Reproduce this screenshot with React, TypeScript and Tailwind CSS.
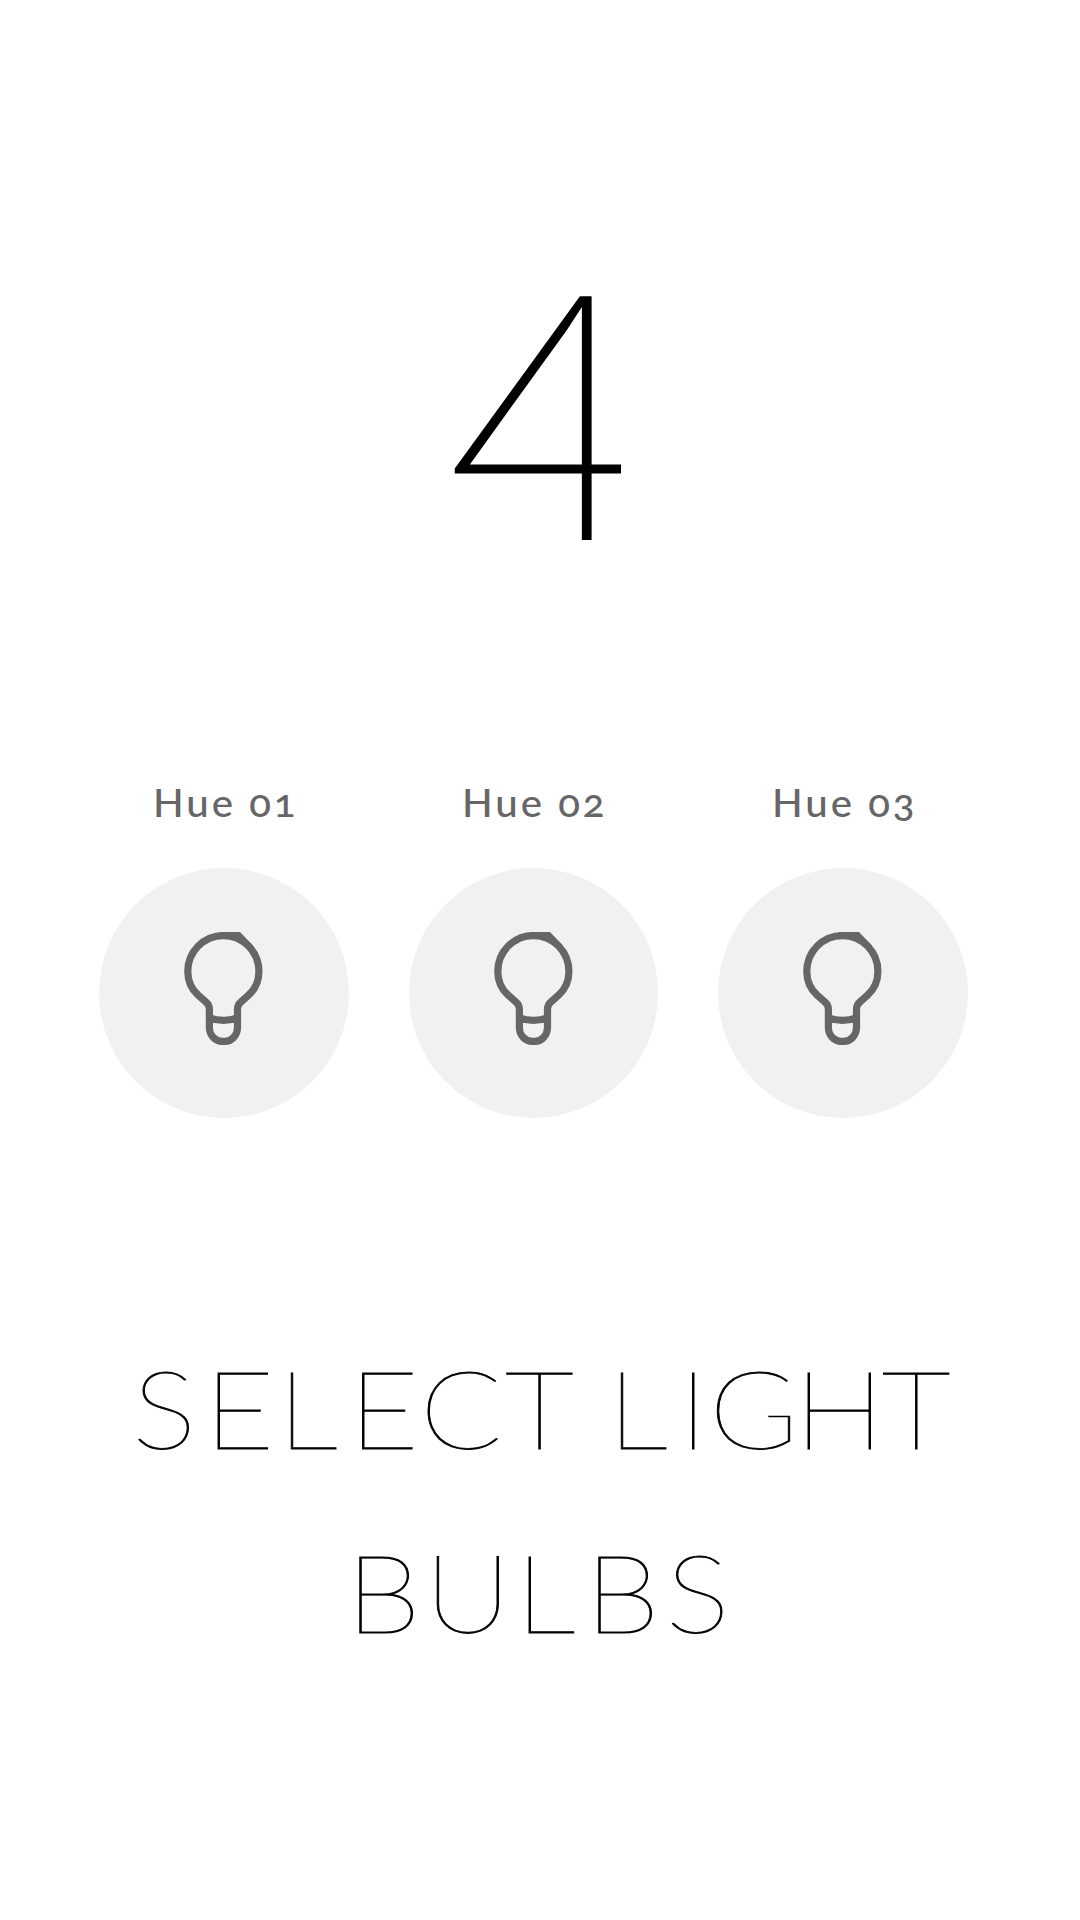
const bulbs = ["Hue 01", "Hue 02", "Hue 03"];

function Bulb() {
  return (
    <svg className="mb-[10px] ml-[3px] h-[145px] w-[110px]" viewBox="0 0 110 145" fill="none">
      <path
        d="M39.4 94.5C39.4 91 38.5 89.2 36.2 87.2L28 80C21 73.5 17.8 65 17.8 56.4A35.5 35.8 0 0 1 88.9 56.4C88.9 65 85.8 73.5 78.7 80L70.6 87.2C68.4 89.2 67.5 91 67.5 94.5V112.5C67.5 121 61 126.4 55 126.4H52C46 126.4 39.4 121 39.4 112.5ZM39.4 102.8Q53.5 108 67.5 102.8"
        stroke="#666"
        strokeWidth="7.2"
      />
      <path d="M50 17H70L83 30.5L78 34Q66 20 50 19Z" fill="#666" />
    </svg>
  );
}

export default function App() {
  return (
    <main className="flex h-[1920px] w-[1080px] flex-col overflow-hidden bg-white font-['Lato',sans-serif] text-black">
      <div className="mt-[219px] flex h-[408px] pl-[440px] font-['Roboto'] text-[343px] leading-[408px] font-thin">
        <span className="w-[200px] origin-left scale-x-[1.075] [clip-path:inset(0_31.6px_0_0)]">4</span>
      </div>
      <div className="mt-[151px] flex gap-[60px] pl-[99px]">
        {bulbs.map((name) => (
          <div key={name} className="flex w-[249.5px] flex-col items-center text-[#666]">
            <span className="h-[48px] scale-x-[1.03] pl-[3px] text-[39px] leading-[48px] font-medium tracking-[2.9px] oldstyle-nums">{name}</span>
            <div className="mt-[42px] flex h-[249.5px] w-[249.5px] items-center justify-center rounded-full bg-[#f1f1f1]">
              <Bulb />
            </div>
          </div>
        ))}
      </div>
      <h1 className="mt-[197px] flex flex-col items-center pl-[5px] text-[109px] leading-[184px] font-thin [-webkit-text-stroke:0.9px_black]">
        <span className="scale-x-111 tracking-[2.5px]">
          <span className="tracking-[7px]">S</span>E<span className="tracking-[9.5px]">L</span>EC<span className="tracking-[-3.5px]">T</span>{" "}
          <span className="tracking-[9.5px]">L</span><span className="tracking-[1px]">I</span><span className="tracking-[-4px]">G</span><span className="tracking-[-2.5px]">H</span>T
        </span>
        <span className="mr-[5px] scale-x-111 tracking-[3.2px]">
          BU<span className="tracking-[8.4px]">L</span><span className="tracking-[5.5px]">B</span>S
        </span>
      </h1>
    </main>
  );
}
